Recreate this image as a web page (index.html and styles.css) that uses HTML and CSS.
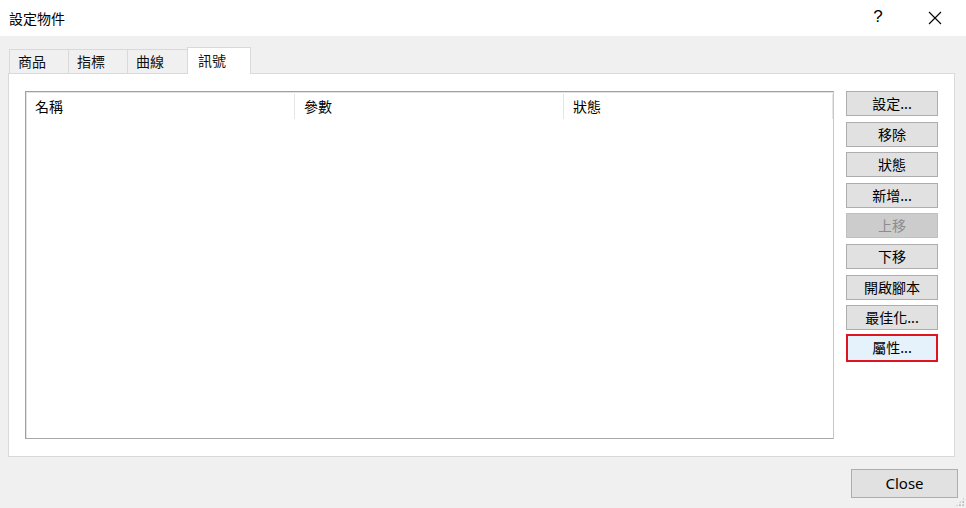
FILE: index.html
```html
<!DOCTYPE html>
<html>
<head>
    <title>設定物件</title>
    <meta name="viewport" content="width=device-width, initial-scale=1.0">
    <link rel="stylesheet" href="styles.css">
</head>
<body>
    <div class="dialog">
        <div class="title-bar">
            <span class="title">設定物件</span>
            <span class="help">?</span>
            <span class="close-x">
                <svg width="14" height="14" viewBox="0 0 14 14">
                    <path d="M1 1 L13 13 M13 1 L1 13" stroke="#000" stroke-width="1.1" fill="none"/>
                </svg>
            </span>
        </div>
        <div class="content">
            <div class="tabs">
                <div class="tab">商品</div>
                <div class="tab">指標</div>
                <div class="tab">曲線</div>
                <div class="tab active">訊號</div>
            </div>
            <div class="panel">
                <div class="list">
                    <div class="list-header">
                        <div class="col col-name">名稱</div>
                        <div class="col col-param">參數</div>
                        <div class="col col-state">狀態</div>
                    </div>
                </div>
                <div class="actions">
                    <button class="btn">設定...</button>
                    <button class="btn">移除</button>
                    <button class="btn">狀態</button>
                    <button class="btn">新增...</button>
                    <button class="btn" disabled>上移</button>
                    <button class="btn">下移</button>
                    <button class="btn">開啟腳本</button>
                    <button class="btn">最佳化...</button>
                    <button class="btn focused">屬性...</button>
                </div>
            </div>
            <div class="footer">
                <button class="close-btn">Close</button>
            </div>
        </div>
        <div class="grip"></div>
    </div>
</body>
</html>
```

FILE: styles.css
```css
body {
    margin: 0;
    font-family: "Noto Sans CJK TC", "Noto Sans", sans-serif;
    background: #f0f0f0;
    color: #000;
}

.dialog {
    width: 966px;
    height: 508px;
    position: relative;
    overflow: hidden;
}

.title-bar {
    height: 36px;
    background: #fff;
    display: flex;
    align-items: center;
    padding-left: 9px;
}

.title {
    font-size: 14px;
    flex-grow: 1;
}

.help {
    font-family: "Liberation Sans", sans-serif;
    font-size: 17px;
    width: 56px;
    text-align: center;
    padding-left: 4px;
    margin-top: -2px;
}

.close-x {
    width: 58px;
    display: flex;
    justify-content: center;
    padding-right: 2px;
}

.content {
    padding: 10px 11px 0 8px;
}

.tabs {
    display: flex;
    align-items: flex-end;
    height: 27px;
    padding-left: 1px;
}

.tab {
    height: 24px;
    box-sizing: border-box;
    border: 1px solid #d9d9d9;
    border-bottom: none;
    border-right: none;
    background: #f0f0f0;
    font-size: 14px;
    line-height: 22px;
    padding: 0 8px;
    width: 59px;
    color: #111;
}

.tab:nth-child(3) {
    width: 60px;
}

.tab.active {
    height: 27px;
    width: 64px;
    background: #fff;
    border-right: 1px solid #d9d9d9;
    position: relative;
    top: 1px;
    line-height: 24px;
    padding-left: 10px;
}

.panel {
    height: 384px;
    box-sizing: border-box;
    background: #fff;
    border: 1px solid #d9d9d9;
    padding: 17px 16px 17px 16px;
    display: flex;
    gap: 12px;
}

.list {
    flex-grow: 1;
    border: 1px solid #a0a0a0;
    border-right-color: #c8c8c8;
    border-bottom-color: #a8a8a8;
    box-shadow: inset 1px 1px 0 #e3e3e3;
}

.list-header {
    display: flex;
    height: 27px;
    font-size: 14px;
}

.col {
    padding-left: 9px;
    border-right: 1px solid #e5e5e5;
    margin-top: 2px;
    line-height: 24px;
}

.col-name {
    width: 259px;
}

.col-param {
    width: 259px;
}

.col-state {
    width: 259px;
}

.actions {
    width: 92px;
    display: flex;
    flex-direction: column;
    gap: 5.6px;
}

.btn {
    height: 25px;
    box-sizing: border-box;
    border: 1px solid #adadad;
    background: #e1e1e1;
    font-family: "Noto Sans CJK TC", sans-serif;
    font-size: 14px;
    padding: 0;
    color: #000;
    line-height: 21px;
}

.btn:disabled {
    background: #cccccc;
    border-color: #bfbfbf;
    color: #8d8d8d;
}

.btn.focused {
    background: #e5f1fb;
    border: 2px solid #e0141e;
    height: 28px;
    margin-top: -2px;
}

.footer {
    display: flex;
    justify-content: flex-end;
    padding-top: 12px;
}

.close-btn {
    width: 107px;
    height: 29px;
    margin-right: -3px;
    border: 1px solid #adadad;
    background: #e1e1e1;
    font-family: "Noto Sans", "Open Sans", sans-serif;
    font-size: 15px;
    line-height: 20px;
    padding-bottom: 3px;
    color: #000;
}

.grip {
    position: absolute;
    right: 1px;
    bottom: 1px;
    width: 10px;
    height: 10px;
    background-image: radial-gradient(circle, #b8b8b8 1px, transparent 1.2px);
    background-size: 3.3px 3.3px;
    clip-path: polygon(100% 0, 100% 100%, 0 100%);
}
```
